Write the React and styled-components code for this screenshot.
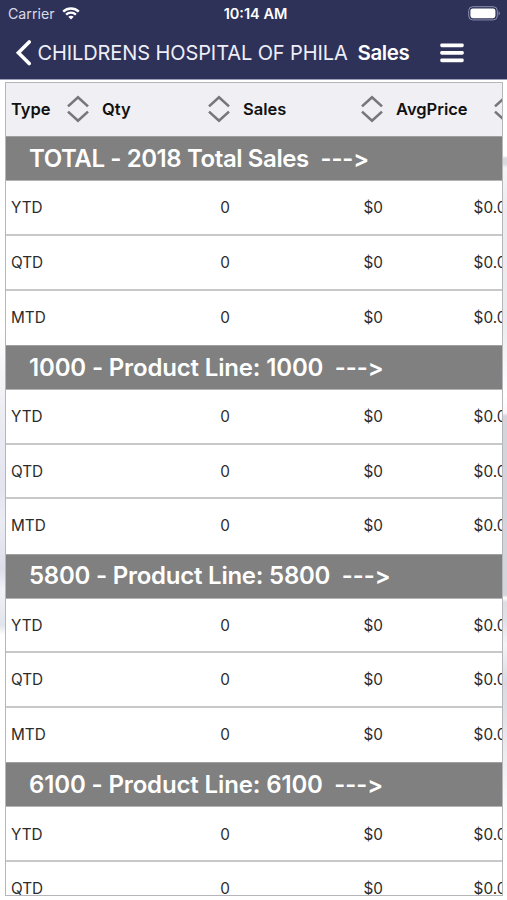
import React from "react";
import styled, { createGlobalStyle } from "styled-components";

/* -------------------------
   Data
   ------------------------- */
const columns = [
  { label: "Type", width: 91 },
  { label: "Qty", width: 141 },
  { label: "Sales", width: 153 },
  { label: "AvgPrice", width: 133 },
];

const groups = [
  { title: "TOTAL - 2018 Total Sales", spacing: "-0.4px" },
  { title: "1000 - Product Line: 1000", spacing: "-0.16px" },
  { title: "5800 - Product Line: 5800", spacing: "-0.24px" },
  { title: "6100 - Product Line: 6100", spacing: "-0.14px" },
];

const periods = ["YTD", "QTD", "MTD"];

/* -------------------------
   Icons
   ------------------------- */
const WifiIcon = () => (
  <svg width="18" height="13" viewBox="0 0 18 13" fill="none" stroke="#fff" strokeWidth="2.4">
    <path d="M1.2 4.6C5.6 0.4 12.4 0.4 16.8 4.6" />
    <path d="M4.1 7.6C6.8 5 11.2 5 13.9 7.6" />
    <path d="M9 12.4L6.3 9.7C7.8 8.3 10.2 8.3 11.7 9.7Z" fill="#fff" stroke="none" />
  </svg>
);

const BatteryIcon = () => (
  <svg width="33" height="15" viewBox="0 0 33 15" fill="none">
    <rect x="0.7" y="0.7" width="28.6" height="13.2" rx="4" stroke="#8c8fac" strokeWidth="1" />
    <rect x="2.4" y="2.4" width="25" height="9.8" rx="2.4" fill="#fff" />
    <path d="M30.6 5.2C32.2 5.8 32.2 8.8 30.6 9.4Z" fill="#8c8fac" />
  </svg>
);

const BackIcon = () => (
  <svg width="17" height="28" viewBox="0 0 17 28" fill="none">
    <path
      d="M15.2 3L4.4 13.8L15.2 24.6"
      stroke="#fff"
      strokeWidth="3.6"
      strokeLinecap="round"
    />
  </svg>
);

const MenuIcon = () => (
  <svg width="24" height="20" viewBox="0 0 24 20" fill="#fff">
    <rect x="0.3" y="0.4" width="23.4" height="3.8" rx="1.4" />
    <rect x="0.3" y="7.9" width="23.4" height="3.8" rx="1.4" />
    <rect x="0.3" y="15.4" width="23.4" height="3.8" rx="1.4" />
  </svg>
);

const SortIcon = () => (
  <svg width="22" height="28" viewBox="0 0 22 28" fill="none" stroke="#77777b" strokeWidth="2.6">
    <path d="M1 11.4L11 2.2L21 11.4" />
    <path d="M1 16.6L11 25.8L21 16.6" />
  </svg>
);

/* -------------------------
   Component
   ------------------------- */
const App = () => {
  return (
    <Screen>
      <GlobalStyle />
      <TopBar>
        <StatusBar>
          <Carrier>
            Carrier <WifiIcon />
          </Carrier>
          <Clock>10:14 AM</Clock>
          <Battery>
            <BatteryIcon />
          </Battery>
        </StatusBar>
        <NavBar>
          <BackButton aria-label="Back">
            <BackIcon />
            <Account>CHILDRENS HOSPITAL OF PHILA</Account>
          </BackButton>
          <PageTitle>Sales</PageTitle>
          <MenuButton aria-label="Menu">
            <MenuIcon />
          </MenuButton>
        </NavBar>
      </TopBar>

      <Content>
        <Grid>
          <HeaderRow>
            {columns.map((col) => (
              <HeaderCell key={col.label} $width={col.width}>
                {col.label}
                <SortIcon />
              </HeaderCell>
            ))}
          </HeaderRow>

          {groups.map((group) => (
            <React.Fragment key={group.title}>
              <GroupRow>
                <GroupTitle $spacing={group.spacing}>{group.title}</GroupTitle>
                <Arrow>---&gt;</Arrow>
              </GroupRow>
              {periods.map((period) => (
                <Row key={period}>
                  <Cell $width={91}>{period}</Cell>
                  <Cell $width={141} $number>0</Cell>
                  <Cell $width={153} $number>$0</Cell>
                  <Cell $width={133} $number>$0.00</Cell>
                </Row>
              ))}
            </React.Fragment>
          ))}
        </Grid>
      </Content>
    </Screen>
  );
};

/* -------------------------
   Styles
   ------------------------- */
const GlobalStyle = createGlobalStyle`
  * {
    box-sizing: border-box;
  }

  body {
    margin: 0;
    overflow: hidden;
    font-family: Inter, "Liberation Sans", sans-serif;
  }

  svg {
    display: block;
    flex: none;
  }
`;

const Screen = styled.div`
  display: flex;
  flex-direction: column;
  width: 507px;
  height: 900px;
  overflow: hidden;
  background: #fff;
`;

const TopBar = styled.header`
  flex: none;
  height: 80px;
  background: #2e3259;
  border-bottom: 1px solid #9da0b8;
  color: #fff;
`;

const StatusBar = styled.div`
  display: grid;
  grid-template-columns: 1fr auto 1fr;
  align-items: center;
  height: 27px;
  padding: 0 6px 0 8px;
`;

const Carrier = styled.div`
  display: flex;
  align-items: center;
  gap: 7px;
  font-size: 14.2px;
  color: #d9dae6;
`;

const Clock = styled.div`
  padding-left: 2px;
  font-size: 14.5px;
  font-weight: 600;
`;

const Battery = styled.div`
  display: flex;
  justify-content: flex-end;
`;

const NavBar = styled.nav`
  display: flex;
  align-items: center;
  height: 51px;
  padding-left: 14px;
`;

const BackButton = styled.button`
  display: flex;
  align-items: center;
  gap: 6.5px;
  width: 343.5px;
  padding: 0;
  border: 0;
  background: none;
  color: #eeeef8;
  font: inherit;
`;

const Account = styled.span`
  font-size: 20px;
  letter-spacing: -0.1px;
  white-space: nowrap;
`;

const PageTitle = styled.h1`
  width: 82.5px;
  margin: 0;
  font-size: 20.5px;
  font-weight: 600;
  letter-spacing: -0.4px;
`;

const MenuButton = styled.button`
  padding: 0;
  border: 0;
  background: none;
`;

const Content = styled.main`
  flex: 1;
  min-height: 0;
  padding: 2px 4px 4px 5px;
  background:
    linear-gradient(#fff, #fff) 5px 0 / 498px 100% no-repeat,
    linear-gradient(
      to bottom,
      #fff 0,
      #fff 76px,
      #d9dae0 78px,
      #d9dae0 84px,
      #f5f5f8 88px,
      #ececf0 130px,
      #eaebef 240px,
      #fff 315px,
      #f8f8fa 333px,
      #d3d5dc 336px,
      #d3d5dc 515px,
      #fff 518px,
      #dddfe5 522px,
      #dfe1e8 540px,
      #f4f5f8 565px,
      #d8dbe4 602px,
      #e1e3e9 640px,
      #fafafb 720px,
      #fff 760px
    ) right 0 / 5px 100% no-repeat,
    linear-gradient(
      to bottom,
      #fff 0,
      #fff 250px,
      #ececf3 335px,
      #e3e4ee 410px,
      #ebecf3 440px,
      #dcdeea 490px,
      #f2f3f7 510px,
      #e1e4eb 545px,
      #fff 555px
    ) left 0 / 5px 100% no-repeat;
`;

const Grid = styled.section`
  height: 814px;
  border: 1.5px solid #b5b5ba;
  overflow: hidden;
  background: #fff;
`;

const HeaderRow = styled.div`
  display: flex;
  width: 518px;
  height: 53.4px;
  padding-bottom: 1px;
  background: #f0eff4;
`;

const HeaderCell = styled.div`
  display: flex;
  align-items: center;
  justify-content: space-between;
  flex: none;
  width: ${({ $width }) => $width}px;
  padding: 0 7.6px 0 5px;
  font-size: 16.5px;
  font-weight: 600;
  color: #111;
`;

const GroupRow = styled.div`
  display: flex;
  align-items: center;
  gap: 11.5px;
  height: 45px;
  padding: 0 0 0.6px 23px;
  border-top: 1px solid #a0a0a2;
  border-bottom: 1px solid #b4b4b6;
  background: #808080;
  color: #fff;
  font-size: 24px;
  font-weight: 600;
  white-space: nowrap;
`;

const GroupTitle = styled.span`
  letter-spacing: ${({ $spacing }) => $spacing};
`;

const Arrow = styled.span`
  font-size: 23.6px;
  font-variant-ligatures: none;
  font-feature-settings: "calt" 0;
`;

const Row = styled.div`
  display: flex;
  width: 518px;
  height: 54.57px;
  padding-top: 0.6px;
  border-bottom: 2px solid #c8c8cb;

  &:has(+ ${GroupRow}) {
    border-bottom-color: transparent;
  }
`;

const Cell = styled.div`
  display: flex;
  align-items: center;
  flex: none;
  width: ${({ $width }) => $width}px;
  padding: 0 8px 0 5px;
  justify-content: ${({ $number }) => ($number ? "flex-end" : "flex-start")};
  font-size: 15.3px;
  color: #2b2b2b;
`;

export default App;
